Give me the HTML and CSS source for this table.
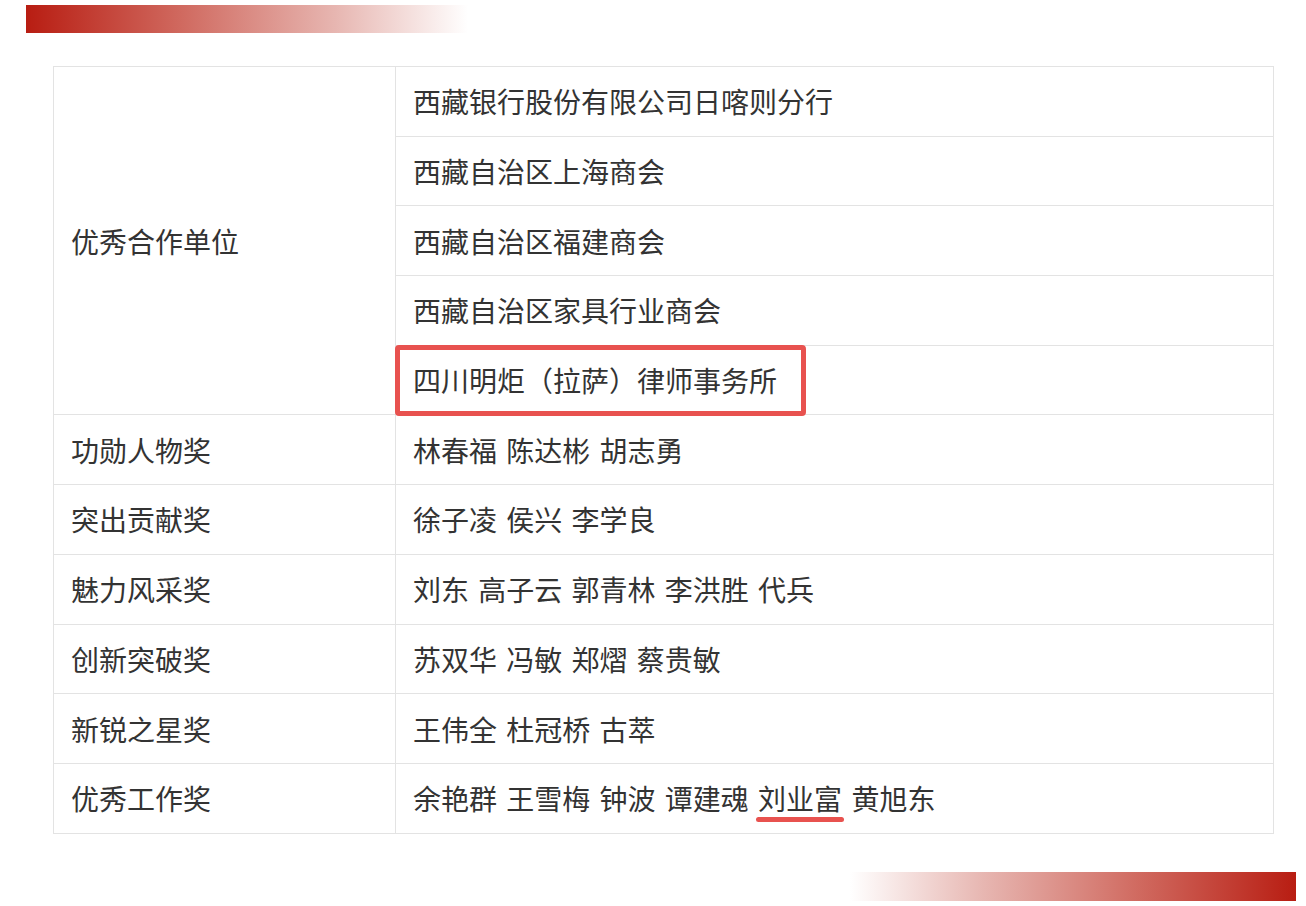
FILE: index.html
```html
<!DOCTYPE html>
<html lang="zh">
<head>
<meta charset="utf-8">
<link rel="stylesheet" href="styles.css">
</head>
<body>
<div class="bar bar-top"></div>
<table class="awards">
  <tr>
    <td class="cat" rowspan="5">优秀合作单位</td>
    <td class="names">西藏银行股份有限公司日喀则分行</td>
  </tr>
  <tr><td class="names">西藏自治区上海商会</td></tr>
  <tr><td class="names">西藏自治区福建商会</td></tr>
  <tr><td class="names">西藏自治区家具行业商会</td></tr>
  <tr><td class="names boxed">四川明炬（拉萨）律师事务所</td></tr>
  <tr><td class="cat">功勋人物奖</td><td class="names">林春福 陈达彬 胡志勇</td></tr>
  <tr><td class="cat">突出贡献奖</td><td class="names">徐子凌 侯兴 李学良</td></tr>
  <tr><td class="cat">魅力风采奖</td><td class="names">刘东 高子云 郭青林 李洪胜 代兵</td></tr>
  <tr><td class="cat">创新突破奖</td><td class="names">苏双华 冯敏 郑熠 蔡贵敏</td></tr>
  <tr><td class="cat">新锐之星奖</td><td class="names">王伟全 杜冠桥 古萃</td></tr>
  <tr><td class="cat">优秀工作奖</td><td class="names">余艳群 王雪梅 钟波 谭建魂 <span class="underline">刘业富</span> 黄旭东</td></tr>
</table>
<div class="bar bar-bottom"></div>
</body>
</html>
```

FILE: styles.css
```css
html, body {
  margin: 0;
  padding: 0;
  background: #ffffff;
}
body {
  width: 1306px;
  height: 906px;
  overflow: hidden;
  font-family: "Microsoft YaHei", "Noto Sans CJK SC", sans-serif;
  color: #333333;
}
.bar {
  height: 28px;
}
.bar-top {
  margin: 5px 0 0 26px;
  width: 442px;
  background: linear-gradient(to right, #b81d12 0%, #d0695f 35%, #e7b6b1 70%, rgba(255,255,255,0) 100%);
}
.bar-bottom {
  margin: 38px 0 0 850px;
  width: 446px;
  height: 29px;
  background: linear-gradient(to left, #b81d12 0%, #d0695f 35%, #e7b6b1 70%, rgba(255,255,255,0) 100%);
}
.awards {
  margin: 33px 0 0 53px;
  width: 1221px;
  border-collapse: collapse;
  font-size: 28px;
  line-height: 1;
  word-spacing: 3px;
}
.awards td {
  border: 1px solid #e3e3e3;
  height: 69.7px;
  padding: 0 17px;
  vertical-align: middle;
  box-sizing: border-box;
  white-space: nowrap;
}
.awards td.cat {
  width: 342px;
}
.awards td.names {
  position: relative;
}
.awards td.boxed::after {
  content: "";
  position: absolute;
  left: -1px;
  top: -1px;
  bottom: -2px;
  width: 411px;
  box-sizing: border-box;
  border: 5px solid #e8524f;
  border-radius: 4px;
}
.underline {
  position: relative;
  display: inline-block;
  word-spacing: 0;
}
.underline::after {
  content: "";
  position: absolute;
  left: -2px;
  right: -2px;
  bottom: -10px;
  height: 5px;
  border-radius: 3px;
  background: #e8524f;
}
```
